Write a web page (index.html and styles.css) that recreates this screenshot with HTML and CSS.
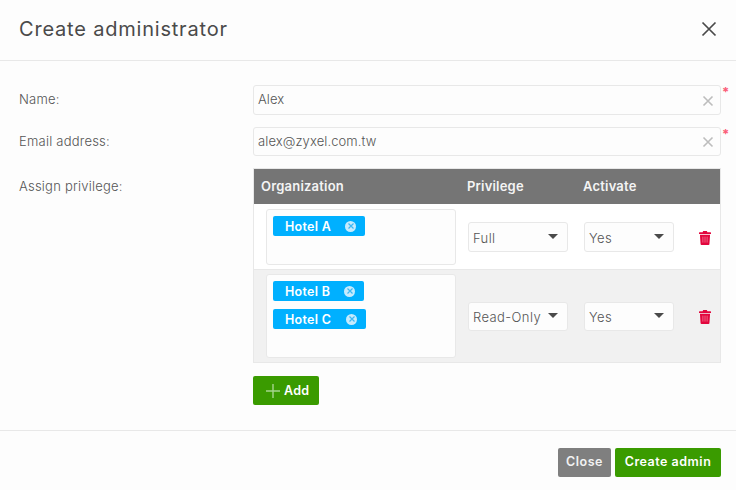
FILE: index.html
```html
<!DOCTYPE html>
<html lang="en">
<head>
<meta charset="utf-8">
<title>Create administrator</title>
<link rel="stylesheet" href="styles.css">
</head>
<body>
<div class="modal">
  <header class="head">
    <h1 class="title">Create administrator</h1>
    <svg class="close-x" width="16" height="16" viewBox="0 0 16 16"><path d="M1.500 1.500 14.500 14.500M14.500 1.500 1.500 14.500" stroke="#4a4a4a" stroke-width="1.700" fill="none"/></svg>
  </header>
  <main class="form">
    <div class="row row-name">
      <label class="label">Name:</label>
      <div class="field">
        <span class="val">Alex</span>
        <svg class="clear" width="12" height="12" viewBox="0 0 12 12"><path d="M1.500 1.500 10.500 10.500M10.500 1.500 1.500 10.500" stroke="#bdbdbd" stroke-width="1.600" fill="none"/></svg>
        <span class="req">*</span>
      </div>
    </div>
    <div class="row row-email">
      <label class="label">Email address:</label>
      <div class="field">
        <span class="val">alex@zyxel.com.tw</span>
        <svg class="clear" width="12" height="12" viewBox="0 0 12 12"><path d="M1.500 1.500 10.500 10.500M10.500 1.500 1.500 10.500" stroke="#bdbdbd" stroke-width="1.600" fill="none"/></svg>
        <span class="req">*</span>
      </div>
    </div>
    <div class="row row-table">
      <label class="label label-table">Assign privilege:</label>
      <div class="table-wrap">
        <div class="table">
          <div class="thead">
            <span>Organization</span><span>Privilege</span><span>Activate</span>
          </div>
          <div class="tr tr-a">
            <div class="org">
              <span class="tag tag-a"><span>Hotel A</span><i class="tag-x"><svg width="8" height="8" viewBox="0 0 8 8"><path d="M1.500 1.500 6.500 6.500M6.500 1.500 1.500 6.500" stroke="#3db8f5" stroke-width="1.200"/></svg></i></span>
            </div>
            <div class="select sel-priv"><span class="sel-text">Full</span><b class="caret"></b></div>
            <div class="select sel-act"><span class="sel-text">Yes</span><b class="caret"></b></div>
            <svg class="trash" width="12" height="14" viewBox="0 0 13 15"><path fill="#e2063d" d="M4.500 0h4l.6 1.300H12.500a.5.5 0 0 1 .5.500V3.200H0V1.800a.5.5 0 0 1 .5-.5H3.900zM1 4h11l-.7 10a1 1 0 0 1-1 1H2.700a1 1 0 0 1-1-1z"/><path d="M4.200 6v6.500M6.500 6v6.500M8.800 6v6.500" stroke="#f6859f" stroke-width=".8"/></svg>
          </div>
          <div class="tr tr-b">
            <div class="org">
              <span class="tag tag-b"><span>Hotel B</span><i class="tag-x"><svg width="8" height="8" viewBox="0 0 8 8"><path d="M1.500 1.500 6.500 6.500M6.500 1.500 1.500 6.500" stroke="#3db8f5" stroke-width="1.200"/></svg></i></span>
              <span class="tag tag-c"><span>Hotel C</span><i class="tag-x"><svg width="8" height="8" viewBox="0 0 8 8"><path d="M1.500 1.500 6.500 6.500M6.500 1.500 1.500 6.500" stroke="#3db8f5" stroke-width="1.200"/></svg></i></span>
            </div>
            <div class="select sel-priv"><span class="sel-text">Read-Only</span><b class="caret"></b></div>
            <div class="select sel-act"><span class="sel-text">Yes</span><b class="caret"></b></div>
            <svg class="trash" width="12" height="14" viewBox="0 0 13 15"><path fill="#e2063d" d="M4.500 0h4l.6 1.300H12.500a.5.5 0 0 1 .5.500V3.200H0V1.800a.5.5 0 0 1 .5-.5H3.900zM1 4h11l-.7 10a1 1 0 0 1-1 1H2.700a1 1 0 0 1-1-1z"/><path d="M4.200 6v6.500M6.500 6v6.500M8.800 6v6.500" stroke="#f6859f" stroke-width=".8"/></svg>
          </div>
        </div>
        <button class="btn add"><svg width="14" height="14" viewBox="0 0 14 14"><path d="M7 0v14M0 7h14" stroke="#a5d58c" stroke-width="1.400"/></svg>Add</button>
      </div>
    </div>
  </main>
  <footer class="foot">
    <button class="btn grey">Close</button>
    <button class="btn green">Create admin</button>
  </footer>
</div>
</body>
</html>
```
FILE: styles.css
```css
* { box-sizing: border-box; }
html, body { margin: 0; height: 100%; }
body {
  width: 736px;
  height: 490px;
  overflow: hidden;
  background: #fdfdfd;
  font-family: "Inter", "Liberation Sans", sans-serif;
  color: #555;
}
.modal { display: flex; flex-direction: column; height: 490px; }
.head {
  height: 61px;
  border-bottom: 1px solid #e8e8e8;
  display: flex;
  align-items: center;
  justify-content: space-between;
  padding: 0 19px 3px 19px;
}
.title {
  margin: 0;
  font-size: 20px;
  font-weight: 400;
  color: #4a4a4a;
  letter-spacing: .8px;
}
.form {
  flex: 1;
  padding: 24px 15px 0 19px;
}
.row { display: grid; grid-template-columns: 234px 468px; }
.row-name { height: 30px; margin-bottom: 12px; }
.row-email { height: 29px; margin-bottom: 12px; }
.label { font-size: 13px; font-weight: 300; color: #555; line-height: 28px; letter-spacing: .22px; }
.label-table { line-height: 36px; }
.field {
  position: relative;
  border: 1px solid #e8e8e8;
  border-radius: 3px;
  background: #fdfdfd;
  display: flex;
  align-items: center;
  justify-content: space-between;
  padding: 0 6px 0 4px;
}
.val { font-size: 13px; font-weight: 300; color: #555; letter-spacing: .1px; margin-top: -2px; }
.clear { margin-top: 1px; }
.req {
  position: absolute;
  left: 468px;
  top: -2px;
  color: #fb5c78;
  font-size: 13px;
  font-weight: 700;
  line-height: 16px;
}
.table-wrap { display: flex; flex-direction: column; align-items: flex-start; }
.table {
  width: 468px;
  border: 1px solid #e8e8e8;
}
.thead {
  height: 35px;
  background: #757575;
  color: #f4f4f4;
  font-size: 13px;
  font-weight: 600;
  letter-spacing: .2px;
  display: grid;
  grid-template-columns: 206px 116px 1fr;
  align-items: center;
  padding-left: 7px;
  padding-bottom: 1px;
}
.tr {
  display: grid;
  grid-template-columns: 190px 112px 106px 13px;
  align-items: center;
  padding-left: 12px;
}
.tr-a { background: #fff; height: 66px; padding-top: 1px; border-bottom: 1px solid #e8e8e8; }
.tr-b { background: #f1f1f1; height: 92px; }
.org {
  border: 1px solid #e8e8e8;
  border-radius: 3px;
  background: #fdfdfd;
  padding: 6px;
  display: flex;
  flex-direction: column;
  align-items: flex-start;
  gap: 8px;
}
.tr-a .org { height: 56px; }
.tr-b .org { height: 84px; }
.tag {
  height: 20px;
  background: #00b0ff;
  border-radius: 2px;
  color: #fff;
  font-size: 12.500px;
  font-weight: 600;
  letter-spacing: .3px;
  display: flex;
  align-items: center;
  justify-content: space-between;
  padding: 0 9px 0 12px;
}
.tag-a { width: 92px; }
.tag-b { width: 91px; }
.tag-c { width: 93px; }
.tag-x {
  width: 11px;
  height: 11px;
  border-radius: 50%;
  background: #c6ebfd;
  display: flex;
  align-items: center;
  justify-content: center;
}
.select {
  height: 30px;
  border: 1px solid #e8e8e8;
  border-radius: 3px;
  background: #fdfdfd;
  font-size: 13px;
  font-weight: 300;
  color: #555;
  letter-spacing: .4px;
  display: flex;
  align-items: center;
  justify-content: space-between;
  padding: 0 9px 0 4px;
}
.sel-text { margin-top: 2px; }
.sel-priv { margin-left: 12px; width: 100px; }
.sel-act { margin-left: 16px; width: 90px; }
.tr-b .select { height: 29px; }
.caret {
  width: 0;
  height: 0;
  border-left: 5px solid transparent;
  border-right: 5px solid transparent;
  border-top: 5px solid #4a4a4a;
  margin-top: -1px;
}
.trash { margin: 2px 0 0 25px; }
.btn {
  border: 0;
  border-radius: 2px;
  font-family: inherit;
  font-size: 12.500px;
  font-weight: 600;
  letter-spacing: .5px;
  color: #fff;
  height: 29px;
  padding: 0 0 2px;
}
.add {
  background: #3a9b00;
  width: 66px;
  margin-top: 13px;
  display: flex;
  align-items: center;
  justify-content: flex-start;
  gap: 4px;
  letter-spacing: .3px;
  padding: 0 0 0 13px;
}
.foot {
  height: 60px;
  border-top: 1px solid #e8e8e8;
  display: flex;
  justify-content: flex-end;
  gap: 4px;
  padding: 17px 15px 0 0;
}
.grey { background: #7f7f7f; width: 53px; color: #f2f2f2; }
.green { background: #3a9b00; width: 106px; }
```
